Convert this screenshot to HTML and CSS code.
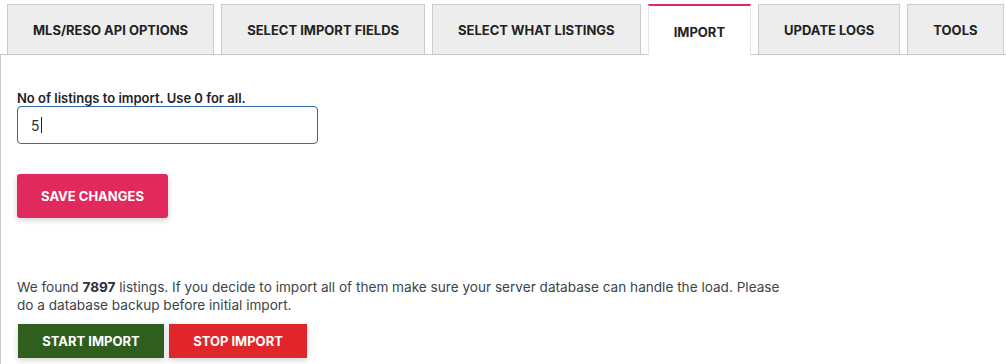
FILE: index.html
```html
<!DOCTYPE html>
<html>
<head>
<meta charset="utf-8">
<link rel="stylesheet" href="styles.css">
</head>
<body>
<nav class="tabs">
  <a class="tab">MLS/RESO API OPTIONS</a>
  <a class="tab">SELECT IMPORT FIELDS</a>
  <a class="tab">SELECT WHAT LISTINGS</a>
  <a class="tab active">IMPORT</a>
  <a class="tab">UPDATE LOGS</a>
  <a class="tab">TOOLS</a>
</nav>
<main class="panel">
  <label class="field-label" for="num">No of listings to import. Use 0 for all.</label>
  <div class="input"><span>5</span><span class="caret"></span></div>
  <button class="btn btn-save">SAVE CHANGES</button>
  <p class="note">We found <strong>7897</strong> listings. If you decide to import all of them make sure your server database can handle the load. Please do a database backup before initial import.</p>
  <div class="actions">
    <button class="btn btn-start">START IMPORT</button>
    <button class="btn btn-stop">STOP IMPORT</button>
  </div>
</main>
</body>
</html>
```
FILE: styles.css
```css
html, body {
  margin: 0;
  padding: 0;
  background: #fff;
  font-family: Inter, "Noto Sans", sans-serif;
  color: #1d2327;
}
.tabs {
  display: flex;
  gap: 7px;
  padding: 4px 0 0 7px;
  height: 50px;
  border-bottom: 1px solid #c6c6c6;
}
.tab {
  box-sizing: border-box;
  height: 50px;
  display: flex;
  align-items: center;
  justify-content: center;
  padding: 1px 25px 0;
  background: #ededed;
  border: 1px solid #cbcbcb;
  border-bottom: none;
  font-size: 13px;
  font-weight: 700;
  color: #222;
  white-space: nowrap;
}
.tab.active {
  background: #fff;
  border-color: #e6e6e6;
  border-top: 2px solid #e0295d;
  padding-top: 2px;
  height: 51px;
  margin-bottom: -1px;
}
.panel {
  border-left: 1px solid #c6c6c6;
  padding: 35px 16px 0 16px;
  height: 309px;
  box-sizing: border-box;
}
.field-label {
  display: block;
  font-size: 13px;
  font-weight: 600;
  line-height: 16px;
  color: #1d2327;
}
.input {
  box-sizing: border-box;
  width: 301px;
  height: 38px;
  border: 1px solid #2c6aa8;
  border-radius: 4px;
  display: flex;
  align-items: center;
  padding-left: 13px;
  font-size: 14px;
  color: #2c3338;
}
.caret {
  display: inline-block;
  width: 1px;
  height: 16px;
  background: #222;
  margin-left: 1px;
}
.btn {
  border: none;
  color: #fff;
  font-family: Inter, "Noto Sans", sans-serif;
  font-size: 13px;
  font-weight: 700;
  box-shadow: 0 2px 6px rgba(0,0,0,0.18);
  padding: 0;
}
.btn-save {
  display: block;
  margin-top: 30px;
  width: 151px;
  height: 44px;
  background: #e02a5e;
  border-radius: 3px;
}
.note {
  margin: 60px 0 0;
  max-width: 780px;
  font-size: 13.6px;
  line-height: 18px;
  color: #3c434a;
}
.note strong {
  font-weight: 700;
  color: #2c3338;
}
.actions {
  display: flex;
  gap: 5px;
  margin-top: 10px;
  padding-left: 1px;
}
.btn-start {
  width: 146px;
  height: 34px;
  background: #2f5e1f;
}
.btn-stop {
  width: 138px;
  height: 34px;
  background: #e0262a;
}
```
